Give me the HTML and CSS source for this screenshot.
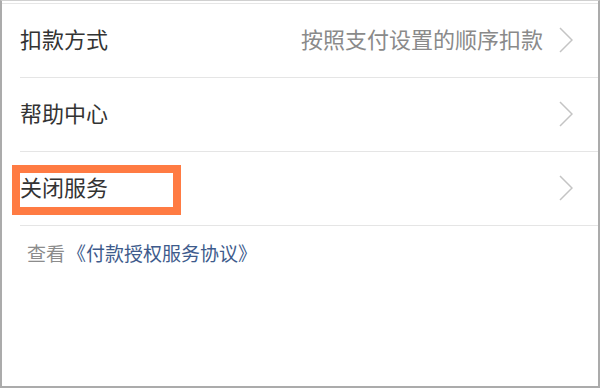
FILE: index.html
```html
<!DOCTYPE html>
<html lang="zh-CN">
<head>
<meta charset="utf-8">
<link rel="stylesheet" href="styles.css">
</head>
<body>
<div class="frame">
  <div class="topline"></div>
  <ul class="list">
    <li class="row">
      <span class="label">扣款方式</span>
      <span class="value">按照支付设置的顺序扣款</span>
      <svg class="chev" width="14" height="26" viewBox="0 0 14 26"><path d="M1 1 L13 13 L1 25" fill="none" stroke="#c4c4c4" stroke-width="1.5"/></svg>
    </li>
    <li class="row">
      <span class="label">帮助中心</span>
      <svg class="chev" width="14" height="26" viewBox="0 0 14 26"><path d="M1 1 L13 13 L1 25" fill="none" stroke="#c4c4c4" stroke-width="1.5"/></svg>
    </li>
    <li class="row">
      <span class="label label-marked">关闭服务</span>
      <svg class="chev" width="14" height="26" viewBox="0 0 14 26"><path d="M1 1 L13 13 L1 25" fill="none" stroke="#c4c4c4" stroke-width="1.5"/></svg>
    </li>
  </ul>
  <p class="footer"><span class="muted">查看</span><a class="link">《付款授权服务协议》</a></p>
</div>
</body>
</html>
```

FILE: styles.css
```css
*, *::before, *::after { box-sizing: border-box; }
html, body { margin: 0; padding: 0; background: #fff; }
body { font-family: "Noto Sans CJK SC", "Noto Sans", sans-serif; }

.frame {
  width: 600px;
  height: 388px;
  border-top: 1px solid #d0d0d0;
  border-left: 2px solid #ababab;
  border-right: 2px solid #ababab;
  border-bottom: 2px solid #ababab;
  background: #fff;
}
.topline {
  margin-top: 2px;
  height: 1px;
  background: #e6e6e6;
}
.list {
  list-style: none;
  margin: 0;
  padding: 0;
}
.row {
  height: 74px;
  margin-left: 18px;
  padding-right: 25px;
  padding-bottom: 5px;
  border-bottom: 1px solid #e5e5e5;
  display: flex;
  align-items: center;
}
.label {
  font-size: 22px;
  line-height: 30px;
  color: #333;
  flex: 1;
}
.value {
  font-size: 22px;
  line-height: 30px;
  color: #8a8a8a;
  margin-right: 16px;
}
.chev { display: block; margin-top: 3px; }

.label-marked { position: relative; flex: 0 0 auto; margin-right: auto; }
.label-marked::after {
  content: "";
  position: absolute;
  left: -8px;
  top: -6px;
  width: 169px;
  height: 50px;
  border: 8px solid #ff7b43;
}

.footer {
  margin: 0;
  padding: 14px 0 0 25px;
  font-size: 19px;
  line-height: 26px;
}
.muted { color: #8c8c8c; }
.link { color: #3e5b8c; margin-left: 2px; }
```
